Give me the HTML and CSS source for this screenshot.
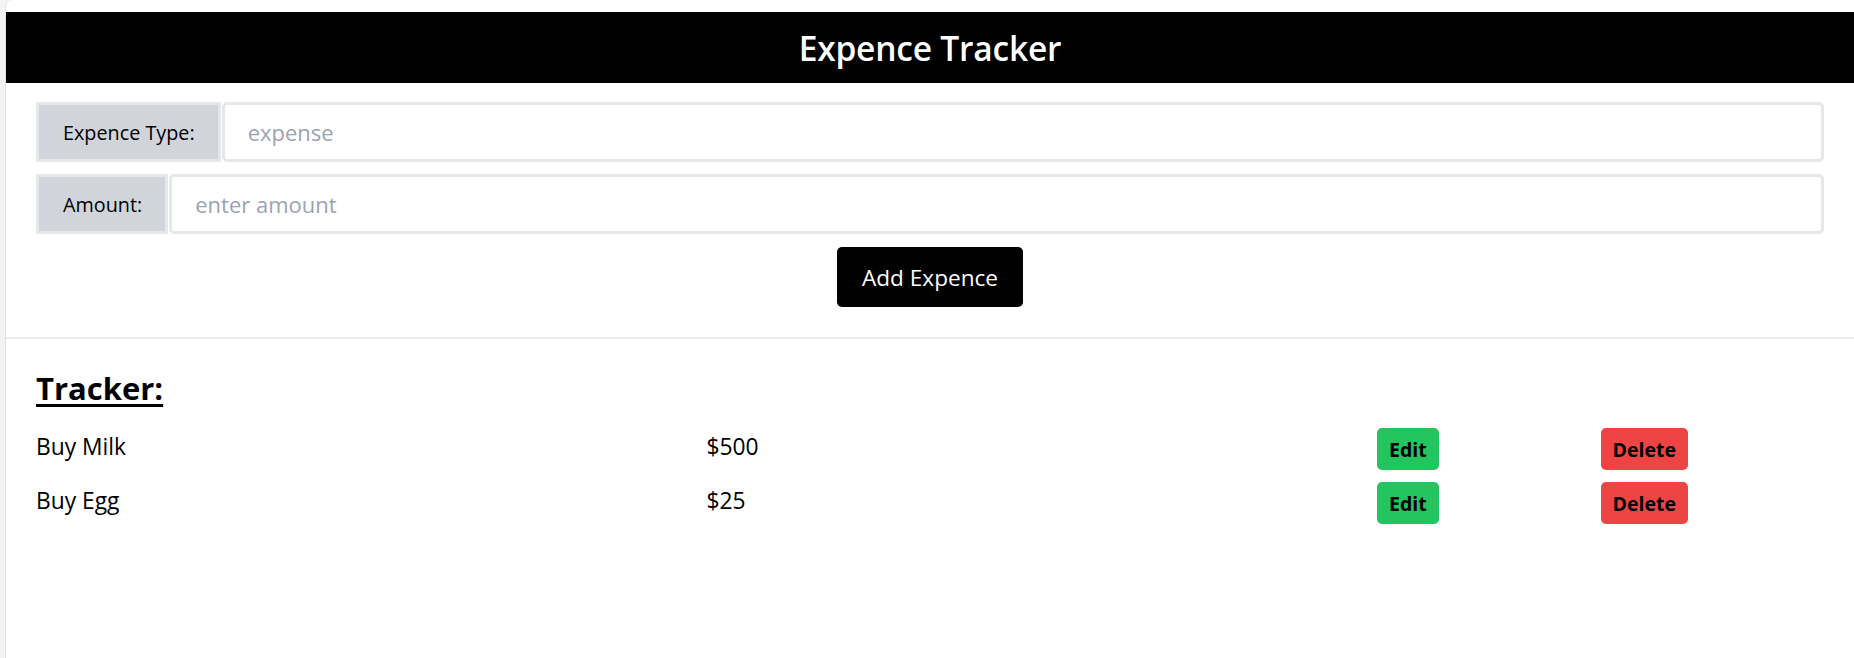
FILE: index.html
```html
<!DOCTYPE html>
<html lang="en">
<head>
<meta charset="utf-8">
<title>Expence Tracker</title>
<link rel="stylesheet" href="styles.css">
</head>
<body>
<div class="window">
  <header class="app-header">
    <h1 class="app-title">Expence Tracker</h1>
  </header>
  <section class="form-section">
    <div class="field-row">
      <label class="field-label" for="type">Expence Type:</label>
      <input class="field-input" id="type" type="text" placeholder="expense">
    </div>
    <div class="field-row">
      <label class="field-label" for="amount">Amount:</label>
      <input class="field-input" id="amount" type="text" placeholder="enter amount">
    </div>
    <div class="action-row">
      <button class="add-btn" type="button">Add Expence</button>
    </div>
  </section>
  <section class="tracker">
    <h2 class="tracker-title">Tracker:</h2>
    <div class="item-row">
      <span class="item-name">Buy Milk</span>
      <span class="item-amount">$500</span>
      <span class="item-cell"><button class="btn btn-edit" type="button">Edit</button></span>
      <span class="item-cell"><button class="btn btn-delete" type="button">Delete</button></span>
    </div>
    <div class="item-row">
      <span class="item-name">Buy Egg</span>
      <span class="item-amount">$25</span>
      <span class="item-cell"><button class="btn btn-edit" type="button">Edit</button></span>
      <span class="item-cell"><button class="btn btn-delete" type="button">Delete</button></span>
    </div>
  </section>
</div>
</body>
</html>
```
FILE: styles.css
```css
* { box-sizing: border-box; }

html, body {
  margin: 0;
  padding: 0;
  height: 100%;
}

body {
  background: #f3f3f3;
  font-family: "Open Sans", "Noto Sans", sans-serif;
  color: #000;
  overflow: hidden;
}

.window {
  margin-left: 5px;
  min-height: 100vh;
  background: #fff;
  border-left: 1px solid #e2e2e2;
  border-top-left-radius: 8px;
  padding-top: 12px;
}

.app-header {
  background: #000;
  height: 71px;
  display: flex;
  align-items: center;
  justify-content: center;
}

.app-title {
  margin: 0;
  color: #fff;
  font-size: 33.5px;
  font-weight: 600;
  letter-spacing: -0.2px;
}

.form-section {
  padding: 19px 30px 30px;
  border-bottom: 2px solid #ebebeb;
  display: flex;
  flex-direction: column;
  gap: 12px;
}

.field-row {
  display: flex;
  height: 60px;
}

.field-label {
  display: flex;
  align-items: center;
  background: #d1d5db;
  border: 3px solid #e5e7eb;
  padding: 0 23px 0 24px;
  font-size: 19.8px;
  white-space: nowrap;
}

.field-input {
  flex: 1;
  margin-left: 1px;
  border: 3px solid #e5e7eb;
  border-radius: 5px;
  padding: 0 23px;
  font-family: inherit;
  font-size: 22px;
  color: #111;
  outline: none;
}

.field-input::placeholder {
  color: #9ca3af;
}

.action-row {
  display: flex;
  justify-content: center;
  margin-top: 1px;
}

.add-btn {
  width: 186px;
  height: 60px;
  background: #000;
  color: #fff;
  border: none;
  border-radius: 5px;
  font-family: inherit;
  font-size: 22.6px;
  cursor: pointer;
}

.tracker {
  padding: 0 30px;
}

.tracker-title {
  margin: 27px 0 18px;
  font-size: 31px;
  font-weight: 700;
  text-decoration: underline;
  text-decoration-thickness: 3px;
  text-underline-offset: 4px;
  line-height: 44px;
}

.item-row {
  display: grid;
  grid-template-columns: 3fr 3fr 1fr 1fr;
  align-items: center;
  height: 42px;
  margin-bottom: 12px;
  font-size: 22.8px;
}

.item-name,
.item-amount {
  line-height: 28px;
  margin-top: -4px;
}

.btn {
  height: 42px;
  border: none;
  border-radius: 5px;
  padding: 0 12px;
  font-family: inherit;
  font-size: 19.5px;
  font-weight: 700;
  color: #000;
  cursor: pointer;
}

.btn-edit {
  background: #22c55e;
}

.btn-delete {
  background: #ef4444;
}
```
